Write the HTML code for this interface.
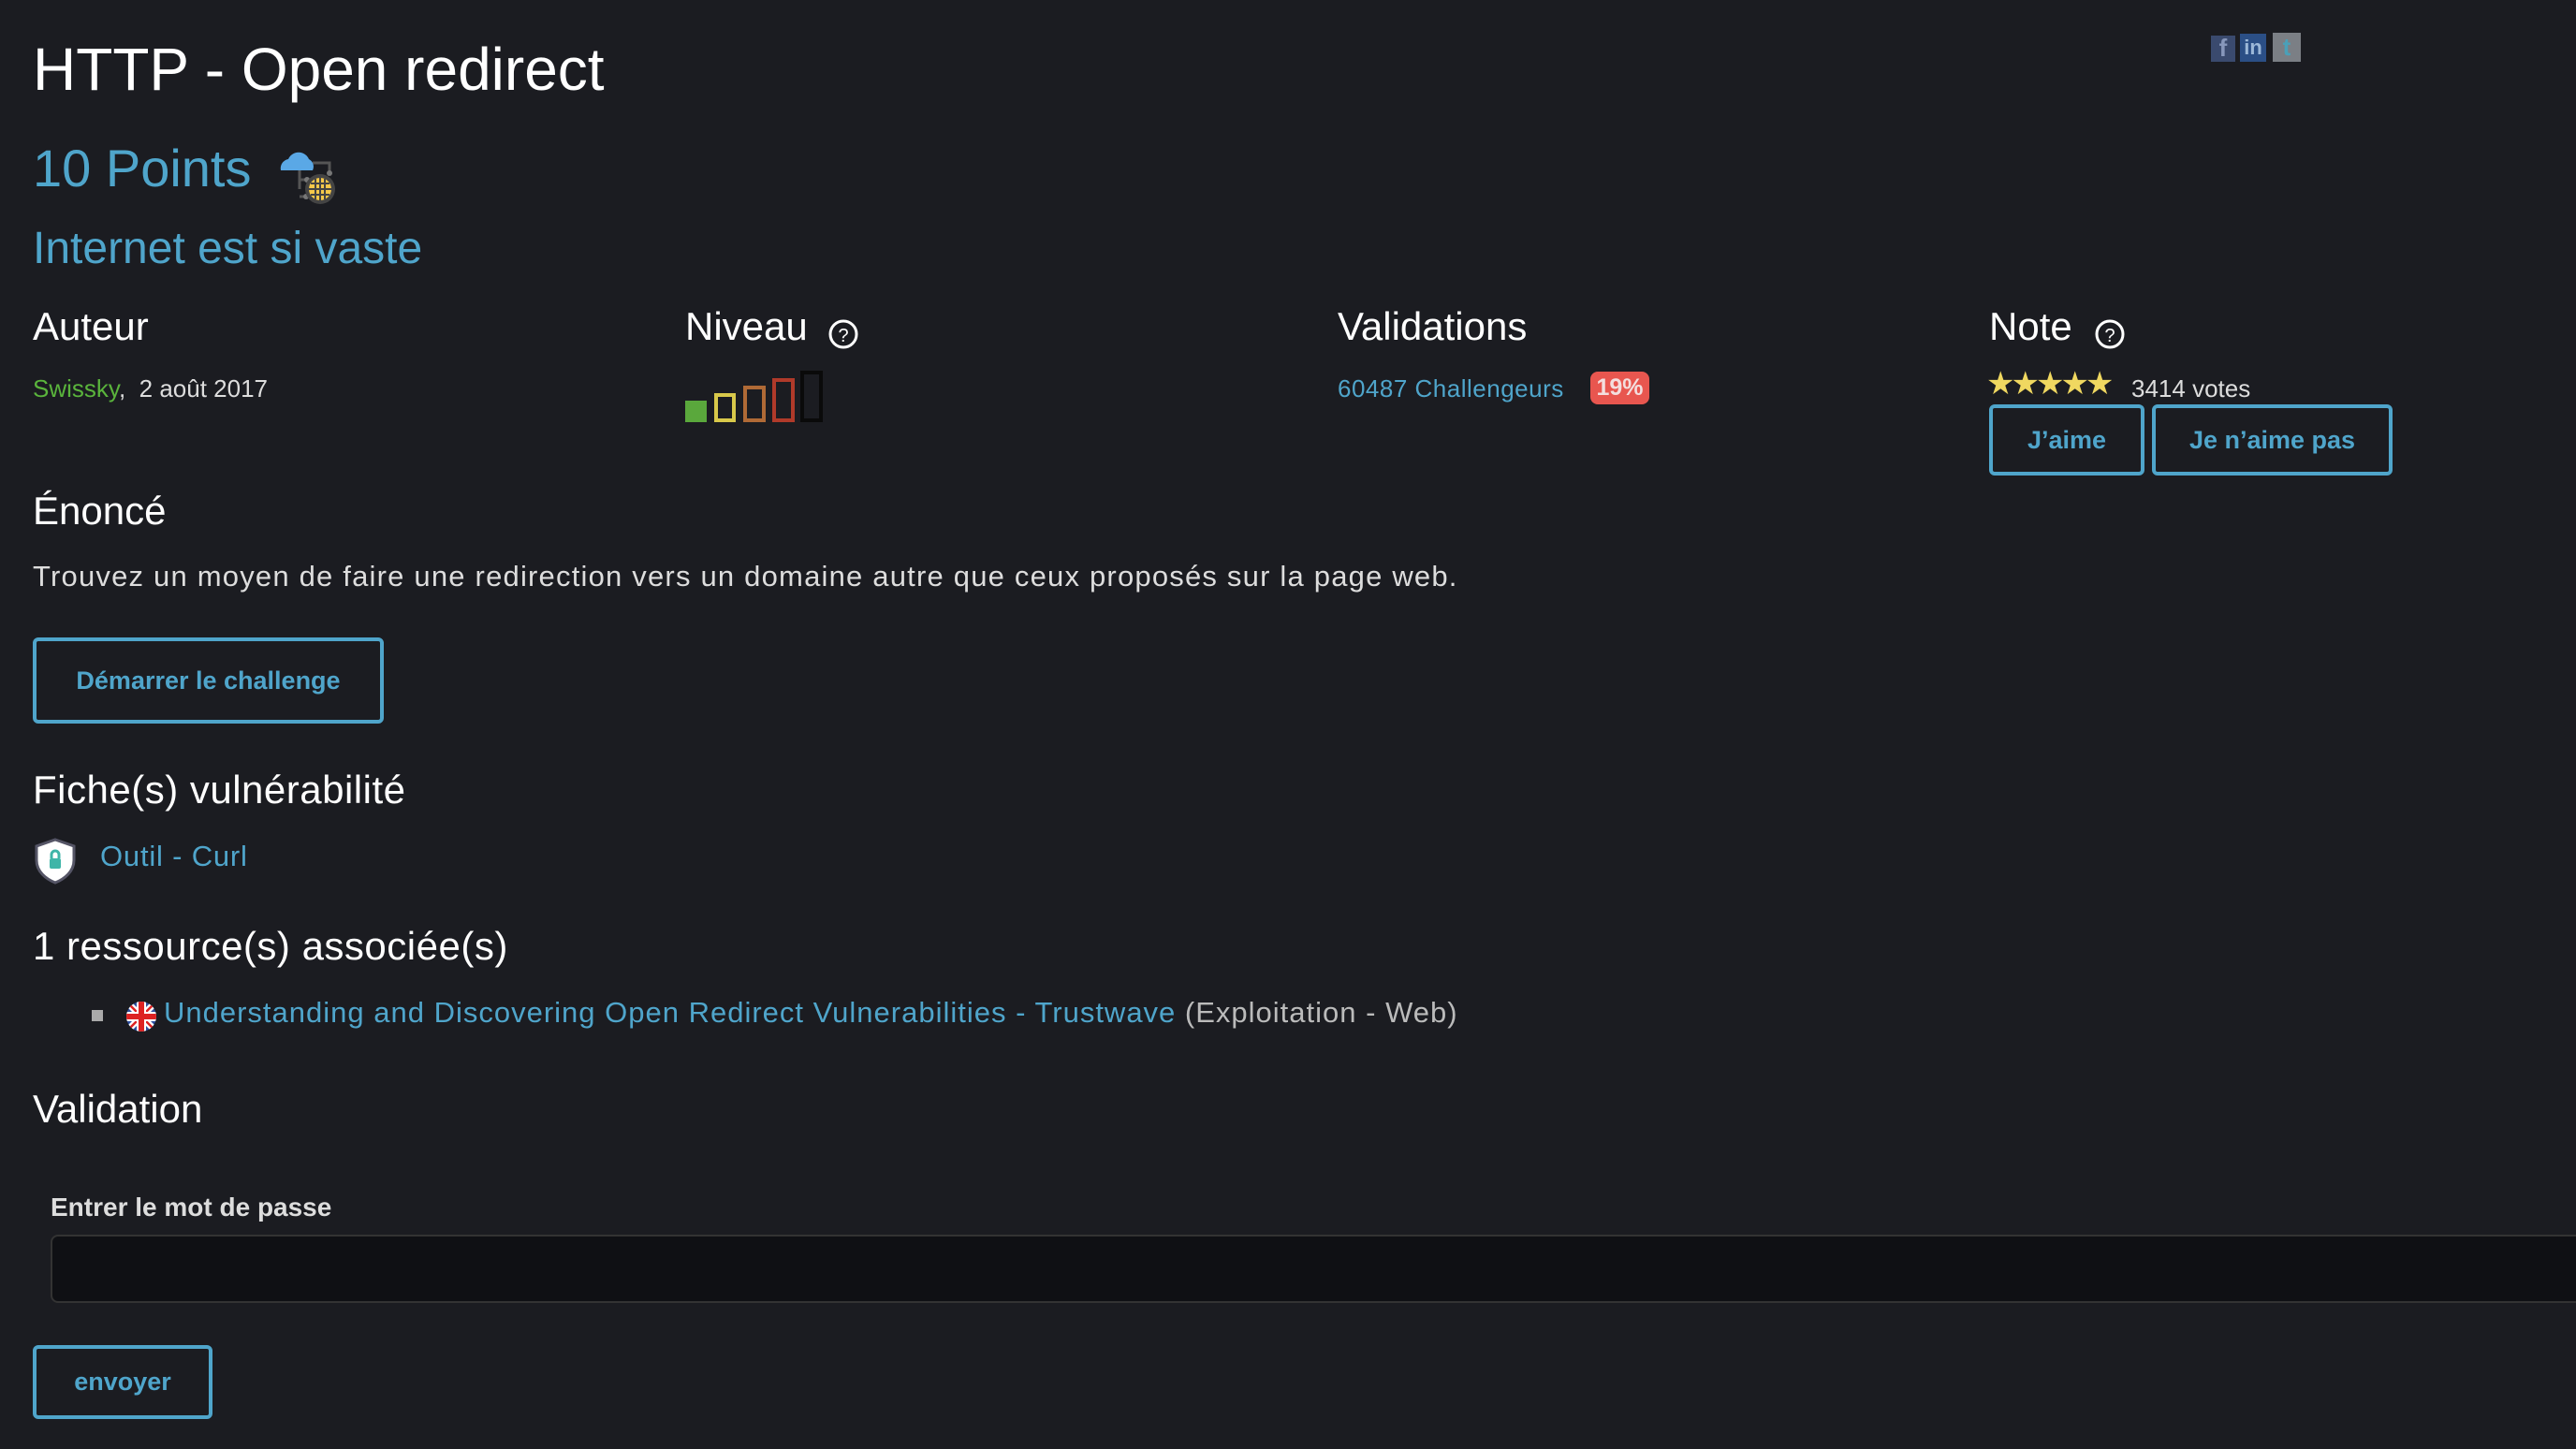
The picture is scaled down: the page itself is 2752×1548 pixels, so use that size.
<!DOCTYPE html>
<html><head><meta charset="utf-8"><style>
html,body{margin:0;padding:0;background:#1b1c21;width:2752px;height:1548px;overflow:hidden;font-family:"Liberation Sans",sans-serif;}
.a{position:absolute;line-height:1;white-space:nowrap;}
.w{color:#fff}
.b{color:#4fa5cb}
.btn{position:absolute;border:4px solid #4fa5cb;border-radius:6px;box-sizing:border-box;color:#4fa5cb;font-weight:bold;font-size:27px;display:flex;align-items:center;justify-content:center;}
</style></head><body>
<div class="a w" style="left:35px;top:42px;font-size:64px;">HTTP - Open redirect</div>
<!-- social -->
<div class="a" style="left:2362px;top:38px;width:26px;height:28px;background:#3a4a6e;color:#8797bb;font-size:26px;font-weight:bold;text-align:center;">f</div>
<div class="a" style="left:2393px;top:36px;width:28px;height:30px;background:#2b4f86;color:#9cb8d8;font-size:22px;font-weight:bold;text-align:center;line-height:30px;">in</div>
<div class="a" style="left:2428px;top:35px;width:30px;height:31px;background:#7b7f85;color:#4aa0b8;font-size:26px;font-weight:bold;text-align:center;line-height:31px;">t</div>

<div class="a b" style="left:35px;top:152px;font-size:56px;">10 Points</div>
<svg class="a" style="left:294px;top:152px" width="68" height="68" viewBox="0 0 68 68">
<path d="M26 50 V30 M26 40 h8 M26 58 h6 M40 22 h18 v10" stroke="#555" stroke-width="3" fill="none"/>
<circle cx="34" cy="40" r="3" fill="#777"/><circle cx="33" cy="58" r="3" fill="#777"/><circle cx="58" cy="33" r="3" fill="#777"/>
<path d="M6 30 a10 10 0 0 1 8-12 a12 12 0 0 1 22 0 a9 9 0 0 1 4 12 z" fill="#5aa8e6"/>
<circle cx="48" cy="50" r="16" fill="#444"/><circle cx="48" cy="50" r="12" fill="#f5c84a"/>
<path d="M36 50h24M48 38v24M38 44h20M38 56h20M43 39v22M53 39v22" stroke="#444" stroke-width="2"/>
</svg>
<div class="a b" style="left:35px;top:242px;font-size:48px;">Internet est si vaste</div>

<div class="a w" style="left:35px;top:328px;font-size:42px;">Auteur</div>
<div class="a" style="left:35px;top:402px;font-size:26px;color:#ddd;"><span style="color:#5ab43c">Swissky</span>,&nbsp; 2 août 2017</div>

<div class="a w" style="left:732px;top:328px;font-size:42px;">Niveau</div>
<svg class="a" style="left:884px;top:340px" width="34" height="34"><circle cx="17" cy="17" r="14" fill="none" stroke="#fff" stroke-width="3"/><text x="17" y="25" font-size="20" fill="#fff" text-anchor="middle" font-family="Liberation Sans">?</text></svg>
<div class="a" style="left:732px;top:428px;width:23px;height:23px;background:#5aa83c"></div>
<div class="a" style="left:763px;top:420px;width:23px;height:31px;border:4px solid #d8c84a;box-sizing:border-box"></div>
<div class="a" style="left:794px;top:412px;width:24px;height:39px;border:4px solid #b06a36;box-sizing:border-box"></div>
<div class="a" style="left:825px;top:404px;width:24px;height:47px;border:4px solid #b03a2a;box-sizing:border-box"></div>
<div class="a" style="left:855px;top:396px;width:24px;height:55px;border:4px solid #0a0a0a;box-sizing:border-box"></div>

<div class="a w" style="left:1429px;top:328px;font-size:42px;">Validations</div>
<div class="a b" style="left:1429px;top:402px;font-size:26px;letter-spacing:0.5px;">60487 Challengeurs</div>
<div class="a" style="left:1699px;top:397px;width:63px;height:35px;background:#e8564f;border-radius:8px;color:#f3dede;font-weight:bold;font-size:25px;line-height:35px;text-align:center;">19%</div>

<div class="a w" style="left:2125px;top:328px;font-size:42px;">Note</div>
<svg class="a" style="left:2237px;top:340px" width="34" height="34"><circle cx="17" cy="17" r="14" fill="none" stroke="#fff" stroke-width="3"/><text x="17" y="25" font-size="20" fill="#fff" text-anchor="middle" font-family="Liberation Sans">?</text></svg>
<div class="a" style="left:2122px;top:393px;font-size:34px;color:#f0d860;letter-spacing:-4px;">★★★★★</div>
<div class="a" style="left:2277px;top:402px;font-size:26px;color:#ddd;">3414 votes</div>
<div class="btn" style="left:2125px;top:432px;width:166px;height:76px;">J’aime</div>
<div class="btn" style="left:2299px;top:432px;width:257px;height:76px;">Je n’aime pas</div>

<div class="a w" style="left:35px;top:525px;font-size:42px;">Énoncé</div>
<div class="a" style="left:35px;top:600px;font-size:31px;color:#ddd;letter-spacing:1.2px;">Trouvez un moyen de faire une redirection vers un domaine autre que ceux proposés sur la page web.</div>
<div class="btn" style="left:35px;top:681px;width:375px;height:92px;">Démarrer le challenge</div>

<div class="a w" style="left:35px;top:823px;font-size:42px;letter-spacing:0.5px;">Fiche(s) vulnérabilité</div>
<svg class="a" style="left:35px;top:895px" width="48" height="50" viewBox="0 0 48 50"><path d="M24 2 L44 9 V24 C44 36 34 44 24 48 C14 44 4 36 4 24 V9 Z" fill="#fff" stroke="#556" stroke-width="3"/><rect x="18" y="22" width="12" height="11" rx="2" fill="#3fb5a8"/><path d="M20 22 v-4 a4 4 0 0 1 8 0 v4" stroke="#3fb5a8" stroke-width="3" fill="none"/></svg>
<div class="a b" style="left:107px;top:899px;font-size:31px;letter-spacing:0.8px;">Outil - Curl</div>

<div class="a w" style="left:35px;top:990px;font-size:42px;letter-spacing:0.5px;">1 ressource(s) associée(s)</div>
<div class="a" style="left:98px;top:1079px;width:12px;height:12px;background:#aaa"></div>
<svg class="a" style="left:134px;top:1069px" width="34" height="34" viewBox="0 0 34 34"><clipPath id="c"><circle cx="17" cy="17" r="16"/></clipPath><g clip-path="url(#c)"><rect width="34" height="34" fill="#2d4fa0"/><path d="M0 0L34 34M34 0L0 34" stroke="#fff" stroke-width="7"/><path d="M0 0L34 34M34 0L0 34" stroke="#d22" stroke-width="2.5"/><path d="M17 0V34M0 17H34" stroke="#fff" stroke-width="10"/><path d="M17 0V34M0 17H34" stroke="#d22" stroke-width="6"/></g></svg>
<div class="a" style="left:175px;top:1066px;font-size:31px;color:#bbb;letter-spacing:1px;"><span class="b">Understanding and Discovering Open Redirect Vulnerabilities - Trustwave</span> (Exploitation - Web)</div>

<div class="a w" style="left:35px;top:1164px;font-size:42px;">Validation</div>
<div class="a" style="left:54px;top:1276px;font-size:28px;font-weight:bold;color:#ddd;">Entrer le mot de passe</div>
<div class="a" style="left:54px;top:1319px;width:2720px;height:73px;background:#0f1014;border:2px solid #333;border-radius:8px;box-sizing:border-box"></div>
<div class="btn" style="left:35px;top:1437px;width:192px;height:79px;">envoyer</div>
</body></html>
